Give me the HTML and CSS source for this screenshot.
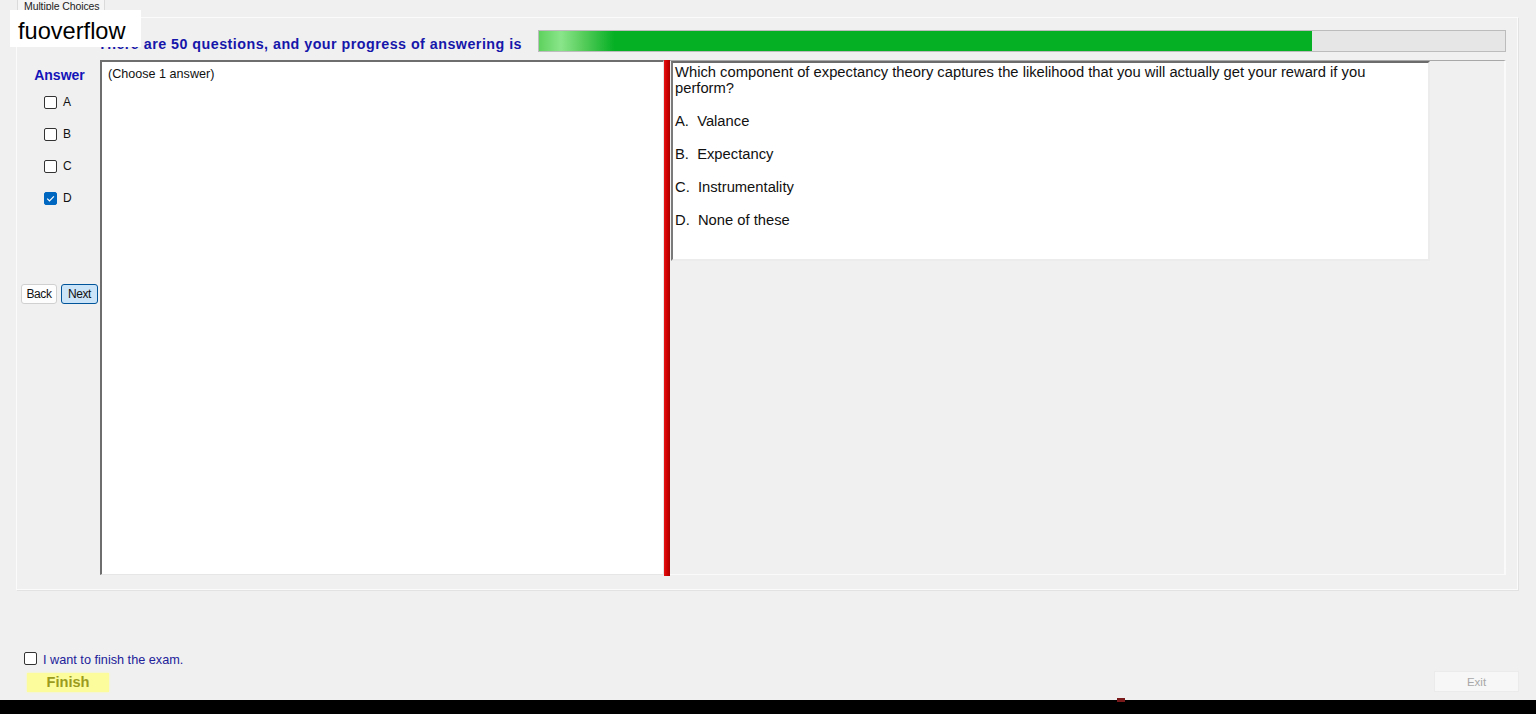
FILE: index.html
```html
<!DOCTYPE html>
<html>
<head>
<meta charset="utf-8">
<link rel="stylesheet" href="styles.css">
</head>
<body>
<div class="window">
  <div class="tabs"><div class="tab">Multiple Choices</div></div>
  <div class="tabpage">
    <div class="header">
      <h1 class="title">There are 50 questions, and your progress of answering is</h1>
      <div class="progress"><div class="fill" style="width:80%"></div></div>
    </div>
    <div class="main">
      <aside class="side">
        <div class="answer-label">Answer</div>
        <div class="choices">
          <label class="choice"><span class="cb"></span><span>A</span></label>
          <label class="choice"><span class="cb"></span><span>B</span></label>
          <label class="choice"><span class="cb"></span><span>C</span></label>
          <label class="choice"><span class="cb checked"><svg viewBox="0 0 13 13" width="13" height="13"><path d="M3.2 6.6 L5.5 8.9 L9.9 4.3" fill="none" stroke="#fff" stroke-width="1.2"/></svg></span><span>D</span></label>
        </div>
        <div class="navs">
          <button class="btn">Back</button>
          <button class="btn btn-next">Next</button>
        </div>
      </aside>
      <div class="answerbox">(Choose 1 answer)</div>
      <div class="splitter"></div>
      <div class="qarea">
        <div class="qbox">
          <p class="qtext">Which component of expectancy theory captures the likelihood that you will actually get your reward if you perform?</p>
          <p class="opt">A.&nbsp; Valance</p>
          <p class="opt">B.&nbsp; Expectancy</p>
          <p class="opt">C.&nbsp; Instrumentality</p>
          <p class="opt">D.&nbsp; None of these</p>
        </div>
      </div>
    </div>
  </div>
  <div class="footer">
    <div class="finish-col">
      <label class="finish-check"><span class="cb"></span><span>I want to finish the exam.</span></label>
      <div class="finish-btn">Finish</div>
    </div>
    <button class="exit-btn">Exit</button>
  </div>
</div>
<div class="taskbar"><span class="tb-mark"></span></div>
<div class="watermark">fuoverflow</div>
</body>
</html>
```

FILE: styles.css
```css
* { box-sizing: border-box; }
html, body { margin: 0; padding: 0; }
body {
  width: 1536px;
  height: 714px;
  overflow: hidden;
  background: #f0f0f0;
  font-family: "Liberation Sans", Arial, sans-serif;
  color: #000;
  position: relative;
}
.window {
  height: 700px;
  display: flex;
  flex-direction: column;
}
.tabs {
  height: 17px;
  padding-left: 17px;
  display: flex;
}
.tab {
  width: 88px;
  height: 14px;
  margin-top: -2px;
  padding: 0 0 0 6px;
  font-size: 10.5px;
  line-height: 14px;
  letter-spacing: -0.1px;
  color: #222;
  background: #f5f5f5;
  border: 1px solid #dadada;
  border-bottom: none;
}
.tabpage {
  margin: 0 18px 0 16px;
  height: 573px;
  border: 1px solid #fbfbfb;
  box-shadow: 1px 1px 0 #e2e2e2;
  padding: 0 11px 0 0;
  display: flex;
  flex-direction: column;
}
.header {
  display: flex;
  align-items: flex-end;
  height: 34px;
  padding-left: 81px;
}
.title {
  margin: 0 16px -1px 0;
  font-size: 14.3px;
  font-weight: bold;
  color: #1616aa;
  line-height: 17px;
  letter-spacing: 0.47px;
  white-space: nowrap;
}
.progress {
  flex: 1;
  height: 22px;
  background: #e6e6e6;
  border: 1px solid #bcbcbc;
}
.fill {
  height: 100%;
  background: linear-gradient(to right, #5ed25e 0px, #8ae58a 22px, #55cc5a 45px, #06b025 75px, #06b025 100%);
}
.main {
  margin-top: 8px;
  height: 515px;
  display: flex;
}
.side {
  width: 83px;
  display: flex;
  flex-direction: column;
  padding-top: 7px;
}
.answer-label {
  text-align: center;
  font-weight: bold;
  font-size: 14px;
  color: #1414b8;
  line-height: 16px;
  padding-left: 2px;
}
.choices {
  margin-top: 3px;
  padding-left: 27px;
  display: flex;
  flex-direction: column;
}
.choice {
  display: flex;
  align-items: center;
  height: 32px;
  font-size: 12px;
  color: #111;
  gap: 6px;
}
.cb {
  width: 13px;
  height: 13px;
  border: 1px solid #333;
  border-radius: 2px;
  background: #fff;
  display: inline-block;
  position: relative;
}
.cb.checked {
  background: #0067c0;
  border-color: #0067c0;
}
.cb.checked svg { position: absolute; left: -1px; top: -1px; }
.navs {
  margin-top: 70px;
  display: flex;
  gap: 4px;
  padding-left: 4px;
}
.btn {
  font-family: "Liberation Sans", Arial, sans-serif;
  font-size: 12px;
  width: 36px;
  height: 20px;
  padding: 0;
  background: #fdfdfd;
  border: 1px solid #d0d0d0;
  border-radius: 3px;
  color: #111;
  letter-spacing: -0.4px;
}
.btn-next {
  background: #cce4f7;
  border: 1px solid #005499;
  width: 37px;
}
.answerbox {
  width: 564px;
  height: 515px;
  background: #fff;
  border: 1px solid;
  border-color: #6e6e6e #e6e6e6 #e6e6e6 #6e6e6e;
  border-width: 2px 1px 1px 2px;
  padding: 5px 6px;
  font-size: 12.6px;
  color: #111;
}
.splitter {
  width: 6px;
  height: 516px;
  background: linear-gradient(to right, #e41414 0, #d00000 50%, #a80000 100%);
}
.qarea {
  flex: 1;
  height: 515px;
  border-top: 1px solid #a8a8a8;
  border-bottom: 1px solid #fafafa;
  border-right: 2px solid #fafafa;
}
.qbox {
  width: 759px;
  height: 200px;
  margin-left: 1px;
  background: #fff;
  border-top: 2px solid #6c6c6c;
  border-left: 2px solid #7a7a7a;
  border-right: 2px solid #ececec;
  border-bottom: 2px solid #ececec;
  padding: 1px 2px;
  font-size: 14.75px;
  line-height: 16px;
  color: #111;
}
.qtext { margin: 0; width: 720px; }
.opt { margin: 17px 0 0 0; }
.footer {
  flex: 1;
  display: flex;
  justify-content: space-between;
  align-items: flex-end;
  padding: 0 17px 8px 24px;
}
.finish-col {
  display: flex;
  flex-direction: column;
}
.finish-check {
  display: flex;
  align-items: center;
  gap: 6px;
  font-size: 12.7px;
  color: #22229a;
}
.finish-check .cb { margin-top: -3px; }
.finish-btn {
  margin-top: 6px;
  margin-left: 3px;
  width: 82px;
  height: 19px;
  background: #fcfc9c;
  color: #9b9b1e;
  font-weight: bold;
  font-size: 14.6px;
  line-height: 19px;
  text-align: center;
  box-shadow: 0 0 2px #fcfca8;
}
.exit-btn {
  width: 85px;
  height: 21px;
  background: #f7f7f7;
  border: 1px solid #ebebeb;
  color: #a8a8a8;
  font-family: "Liberation Sans", Arial, sans-serif;
  font-size: 11.5px;
  padding: 0;
}
.taskbar {
  height: 14px;
  background: #000;
  position: relative;
}
.tb-mark {
  position: absolute;
  left: 1117px;
  top: -2px;
  width: 8px;
  height: 4px;
  background: #7a1a1a;
}
.watermark {
  position: absolute;
  left: 10px;
  top: 10px;
  width: 131px;
  height: 37px;
  background: #fff;
  font-family: "Liberation Sans", Arial, sans-serif;
  font-size: 23.6px;
  line-height: 37px;
  padding: 3px 0 0 8px;
  color: #000;
}
```
